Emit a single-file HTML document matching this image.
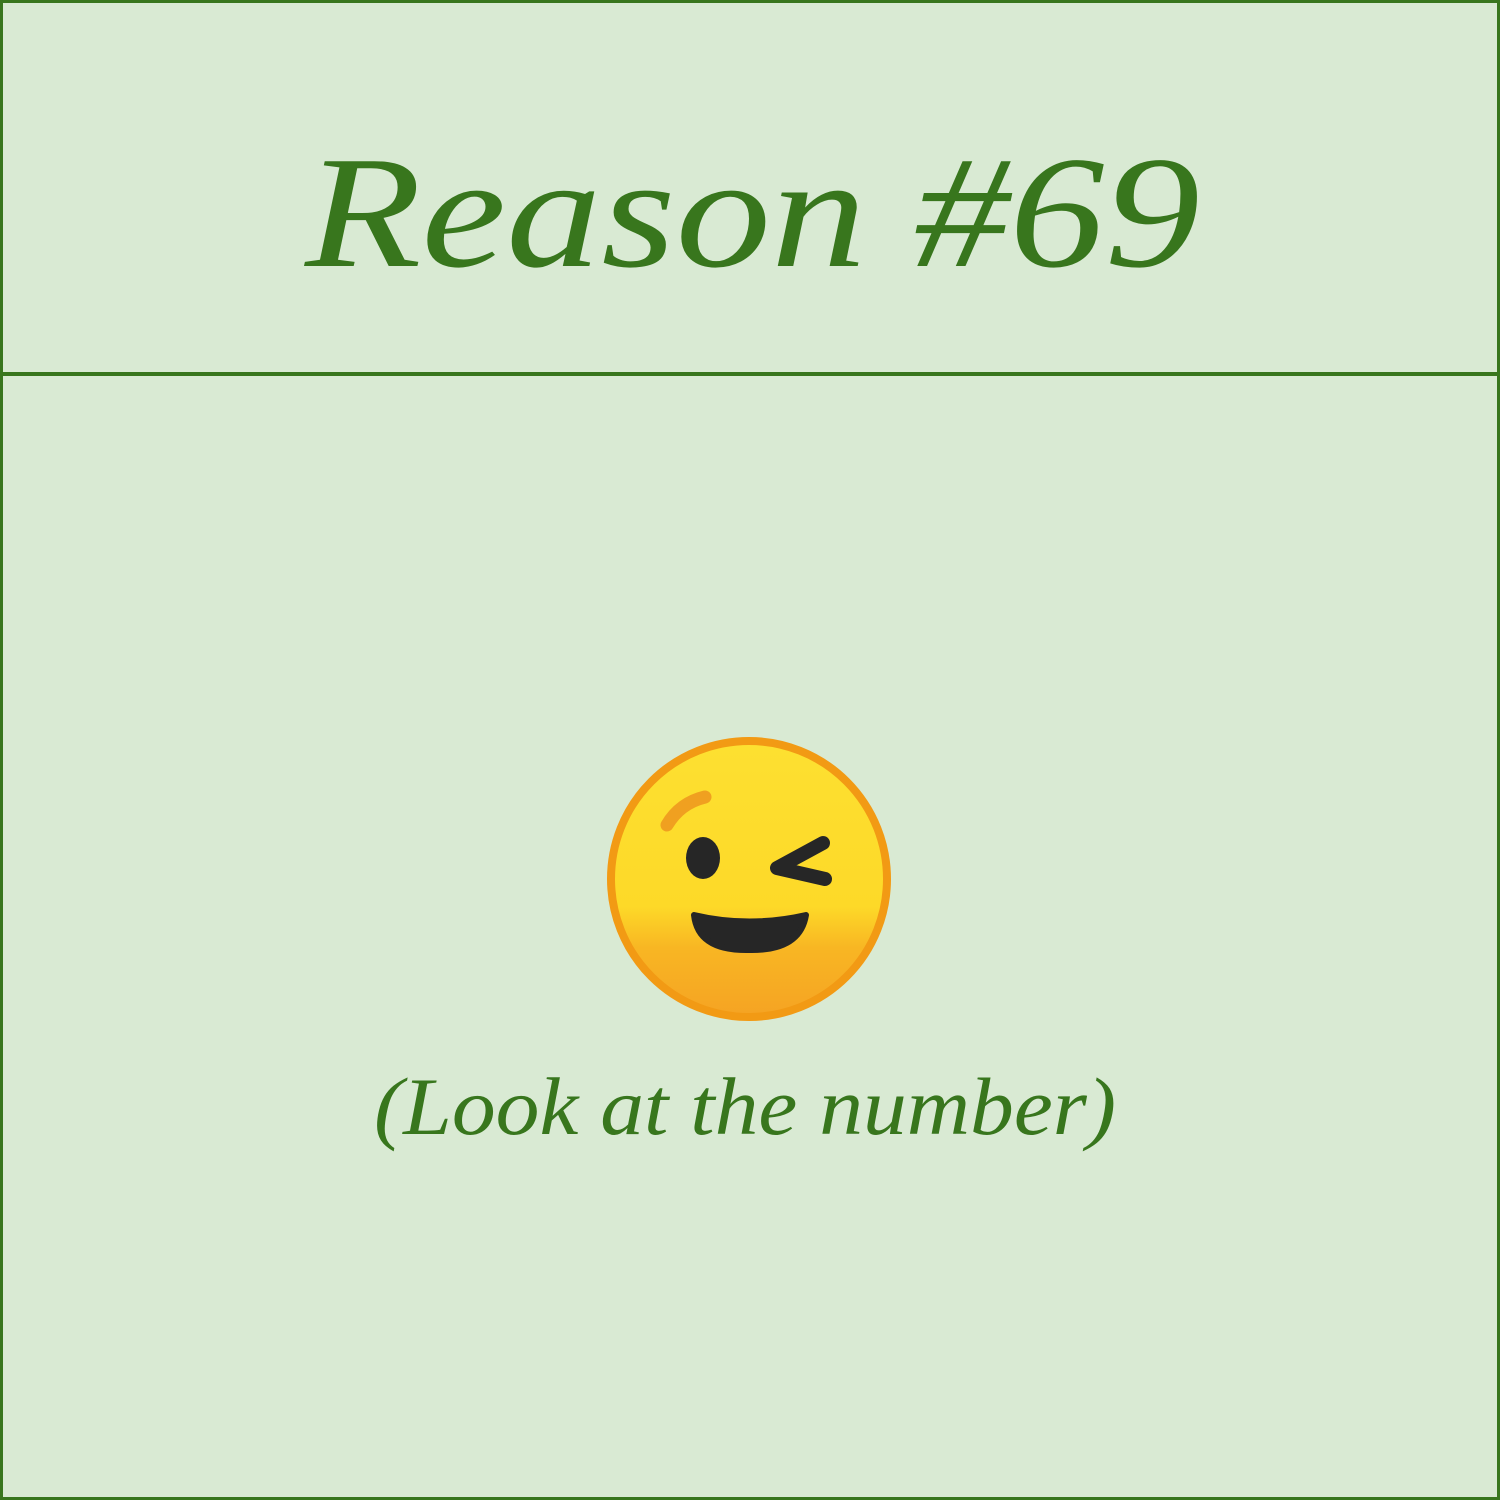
<!DOCTYPE html>
<html><head><meta charset="utf-8"><style>
html,body{margin:0;padding:0;background:#d9ead3;}
svg{display:block}
</style></head><body>
<svg width="1500" height="1500" viewBox="0 0 1500 1500" xmlns="http://www.w3.org/2000/svg">
<rect x="0" y="0" width="1500" height="1500" fill="#d9ead3"/>
<rect x="1.5" y="1.5" width="1497" height="1497" fill="none" stroke="#38761d" stroke-width="3"/>
<rect x="0" y="372" width="1500" height="4" fill="#38761d"/>
<text x="305" y="266" font-family="'Liberation Serif', serif" font-style="italic" font-size="160" fill="#38761d" textLength="895" lengthAdjust="spacingAndGlyphs">Reason #69</text>
<text x="374" y="1134" font-family="'Liberation Serif', serif" font-style="italic" font-size="82" fill="#38761d" textLength="742" lengthAdjust="spacingAndGlyphs">(Look at the number)</text>
<defs>
<linearGradient id="g" x1="0" y1="0" x2="0" y2="1">
<stop offset="0" stop-color="#fde031"/>
<stop offset="0.6" stop-color="#fdd928"/>
<stop offset="0.75" stop-color="#f8b623"/>
<stop offset="1" stop-color="#f5a323"/>
</linearGradient>
</defs>
<circle cx="749" cy="879" r="138" fill="url(#g)" stroke="#f29a14" stroke-width="8"/>
<path d="M667 825 Q680 803 705 797" fill="none" stroke="#f0a020" stroke-width="13" stroke-linecap="round"/>
<ellipse cx="703" cy="858" rx="17" ry="21" fill="#262626"/>
<path d="M823 843 L777 868 L825 879" fill="none" stroke="#262626" stroke-width="14" stroke-linecap="round" stroke-linejoin="round"/>
<path d="M694 915 Q749 928 806 915 Q800 951 749 950 Q698 951 694 915 Z" fill="#262626" stroke="#262626" stroke-width="6" stroke-linejoin="round"/>
</svg>
</body></html>
